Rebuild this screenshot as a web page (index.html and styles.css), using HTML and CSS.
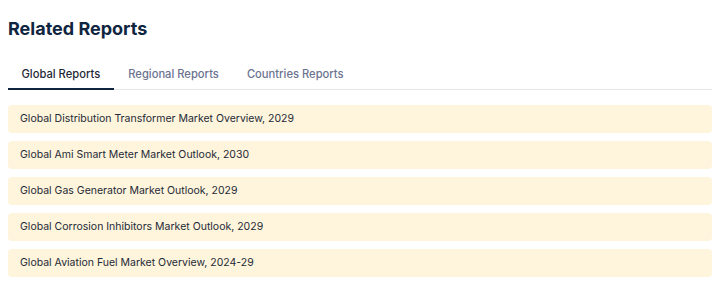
FILE: index.html
```html
<!DOCTYPE html>
<html lang="en">
<head>
    <meta charset="UTF-8">
    <meta name="viewport" content="width=device-width, initial-scale=1.0">
    <title>Related Reports</title>
    <link rel="stylesheet" href="styles.css">
</head>
<body>
    <div class="related">
        <h2 class="title">Related Reports</h2>
        <div class="tabs">
            <button class="tab active">Global Reports</button>
            <button class="tab">Regional Reports</button>
            <button class="tab">Countries Reports</button>
        </div>
        <ul class="report-list">
            <li class="report">Global Distribution Transformer Market Overview, 2029</li>
            <li class="report">Global Ami Smart Meter Market Outlook, 2030</li>
            <li class="report">Global Gas Generator Market Outlook, 2029</li>
            <li class="report">Global Corrosion Inhibitors Market Outlook, 2029</li>
            <li class="report">Global Aviation Fuel Market Overview, 2024-29</li>
        </ul>
    </div>
</body>
</html>
```

FILE: styles.css
```css
* {
    margin: 0;
    padding: 0;
    box-sizing: border-box;
}

body {
    font-family: Inter, 'Noto Sans', sans-serif;
    background: #fff;
    padding: 8px;
    width: 723px;
    padding-right: 11px;
}

.title {
    color: #0f2540;
    font-size: 18px;
    font-weight: 700;
    line-height: 24px;
    margin-top: 9px;
}

.tabs {
    display: flex;
    gap: 1px;
    margin-top: 18px;
    border-bottom: 1px solid #e5e7eb;
}

.tab {
    background: none;
    border: none;
    font-family: inherit;
    font-size: 11.2px;
    font-weight: 500;
    color: #6b7390;
    padding: 8px 13.5px 7px;
    line-height: 14px;
    border-bottom: 2px solid transparent;
    margin-bottom: -1px;
    cursor: pointer;
}

.tab.active {
    color: #1f2937;
    border-bottom-color: #0f2540;
}

.report-list {
    list-style: none;
    margin-top: 15px;
    display: flex;
    flex-direction: column;
    gap: 8px;
}

.report {
    background: #fef5dc;
    border-radius: 4px;
    height: 28px;
    line-height: 28px;
    padding: 0 12px;
    font-size: 10.5px;
    color: #1f2937;
}
```
